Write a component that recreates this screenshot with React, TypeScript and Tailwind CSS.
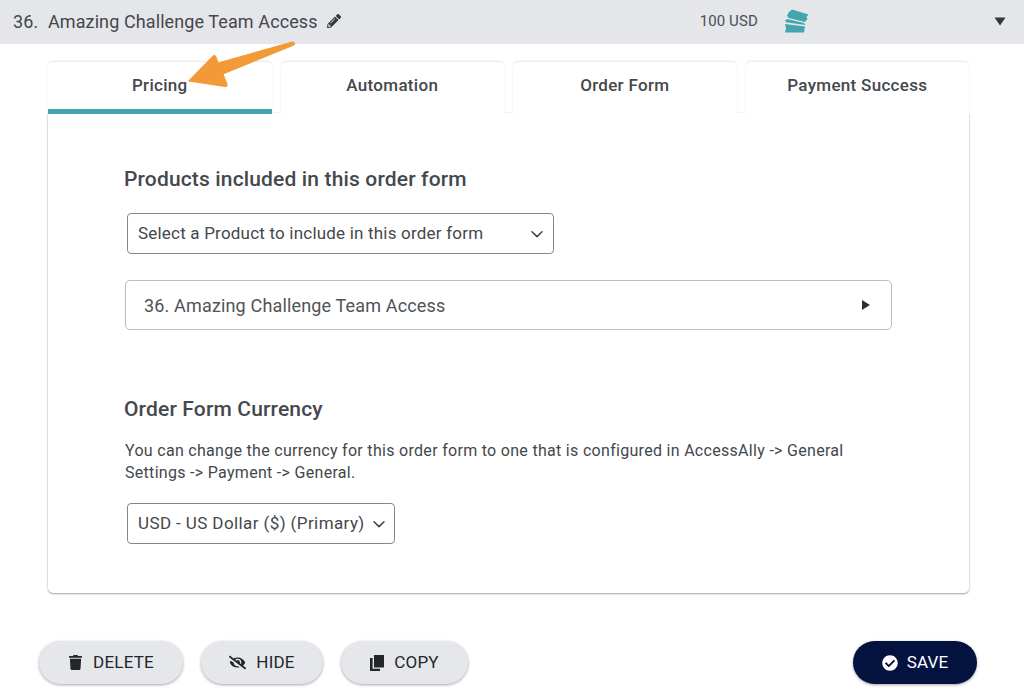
import React from "react";
import { FaTrash, FaEyeSlash, FaCheckCircle, FaPencilAlt } from "react-icons/fa";

function Tab({ label, active }: { label: string; active?: boolean }) {
  return (
    <div
      className={
        active
          ? "relative z-10 flex h-[52px] w-[223.5px] items-center justify-center rounded-t-[5px] border-b-[5px] border-[#44a5ad] bg-white pt-[1px] text-[17px] font-medium tracking-[0.3px] text-[#45484d] shadow-[0_-1px_2px_rgba(0,0,0,0.1)]"
          : "flex h-[51px] w-[223.5px] items-center justify-center rounded-t-[5px] bg-white pb-[5px] pt-[1px] text-[17px] font-medium tracking-[0.3px] text-[#45484d] shadow-[0_-1px_2px_rgba(0,0,0,0.1)]"
      }
    >
      {label}
    </div>
  );
}

function Chevron() {
  return (
    <svg width="14" height="14" viewBox="0 0 14 14" fill="none" stroke="#3f4348" strokeWidth="1.5" strokeLinecap="round" strokeLinejoin="round">
      <path d="M2 4.8 7 9.6 12 4.8" />
    </svg>
  );
}

function CopyIcon() {
  return (
    <svg width="14" height="16" viewBox="0 0 14 16" fill="#23262b">
      <path d="M4 0H14V12.5H4Z" />
      <path d="M0 3H2.6V13.8H10V16H0Z" />
    </svg>
  );
}

function PillButton({ icon, label, width }: { icon: React.ReactNode; label: string; width: string }) {
  return (
    <button className={`flex h-[43px] ${width} items-center justify-center gap-[10px] rounded-full bg-[#e5e7eb] text-[17px] font-normal tracking-[0.2px] text-[#23262b] shadow-[0_1px_3px_rgba(0,0,0,0.35)]`}>
      {icon}
      {label}
    </button>
  );
}

export default function App() {
  return (
    <div className="relative h-[700px] w-[1024px] overflow-hidden bg-white font-['Roboto',sans-serif] text-[#3c3f44]">
      <header className="flex h-[44px] items-center bg-[#e4e6ea] pb-[2px] pl-[13px] text-[#44474c]">
        <span className="w-[35px] text-[18px] tracking-[0.1px]">36.</span>
        <span className="text-[18px] tracking-[0.1px]">Amazing Challenge Team Access</span>
        <FaPencilAlt className="ml-[9px] text-[14px] text-[#33363b]" />
        <span className="ml-[359px] text-[15px] tracking-[0.1px] text-[#4b4e53]">100 USD</span>
        <svg className="ml-[26px]" width="25" height="24" viewBox="0 0 25 24" fill="#44a5ad">
          <path d="M5 3 8 0.5 24.5 5.5 22.5 8 23.5 10 21 13 4.5 9 3 6.5Z" />
          <path d="M3 10 20 14 21.5 16 2 13.2 1 11.5Z" />
          <path d="M1 15 21 17.5 20 23.5 1 23.5 2 19.5Z" />
        </svg>
        <svg className="ml-auto mr-[18px]" width="12" height="9" viewBox="0 0 12 9" fill="#33363b">
          <path d="M0.5 0.5H11.5L6 8.5Z" />
        </svg>
      </header>

      <main className="ml-[48px] mt-[18px] w-[921px]">
        <div className="flex h-[51px] justify-between">
          <Tab label="Pricing" active />
          <Tab label="Automation" />
          <Tab label="Order Form" />
          <Tab label="Payment Success" />
        </div>
        <section className="h-[480px] rounded-b-[5px] bg-white pl-[76px] pt-[53px] shadow-[0_1px_2px_rgba(0,0,0,0.35),0_0_2px_rgba(0,0,0,0.12)]">
          <h2 className="text-[21px] font-medium leading-[26px] tracking-[0.15px] text-[#45484d]">Products included in this order form</h2>
          <div className="ml-[3px] mt-[21px] flex h-[41px] w-[427px] items-center justify-between rounded-[4px] border border-[#83878c] pl-[10px] pr-[9px] text-[17px] tracking-[0.2px] text-[#44474c]">
            <span>Select a Product to include in this order form</span>
            <Chevron />
          </div>
          <div className="ml-[1px] mt-[26px] flex h-[50px] w-[767px] items-center justify-between rounded-[5px] border border-[#b9bcc0] pl-[18px] pr-[21px] text-[18px] tracking-[0.16px] text-[#505358]">
            <span>36. Amazing Challenge Team Access</span>
            <svg width="8" height="10" viewBox="0 0 8 10" fill="#2c2f33">
              <path d="M0 0 8 5 0 10Z" />
            </svg>
          </div>
          <h2 className="mt-[66px] text-[21px] font-medium leading-[26px] tracking-[0.15px] text-[#45484d]">Order Form Currency</h2>
          <p className="ml-[1px] mt-[18px] w-[730px] text-[16px] leading-[22px] tracking-[0.3px] text-[#44474c]">
            You can change the currency for this order form to one that is configured in AccessAlly -&gt; General Settings -&gt; Payment -&gt; General.
          </p>
          <div className="ml-[3px] mt-[19px] flex h-[41px] w-[268px] items-center justify-between rounded-[4px] border border-[#83878c] pl-[10px] pr-[8px] text-[17px] tracking-[0.4px] text-[#44474c]">
            <span>USD - US Dollar ($) (Primary)</span>
            <Chevron />
          </div>
        </section>
      </main>

      <footer className="ml-[39px] mt-[48px] flex w-[938px] items-center">
        <PillButton icon={<FaTrash className="text-[15px]" />} label="DELETE" width="w-[144px]" />
        <div className="ml-[18px]">
          <PillButton icon={<FaEyeSlash className="text-[17px]" />} label="HIDE" width="w-[122px]" />
        </div>
        <div className="ml-[18px]">
          <PillButton icon={<CopyIcon />} label="COPY" width="w-[127px]" />
        </div>
        <button className="ml-auto flex h-[43px] w-[124px] items-center justify-center gap-[9px] rounded-full bg-[#03123f] text-[17px] font-normal tracking-[0.2px] text-white shadow-[0_1px_3px_rgba(0,0,0,0.35)]">
          <FaCheckCircle className="text-[16px]" />
          SAVE
        </button>
      </footer>

      <svg className="absolute left-[180px] top-[38px] z-20" width="120" height="54" viewBox="0 0 120 54" fill="#f29a38">
        <path d="M8.5 43 L33 18 Q35 16 36 19 L38 25 L112 4 Q116 4 114 7 L43 36 L47 46 Q48 49 45 48.5 Z" stroke="#f29a38" strokeWidth="1" strokeLinejoin="round" />
      </svg>
    </div>
  );
}
